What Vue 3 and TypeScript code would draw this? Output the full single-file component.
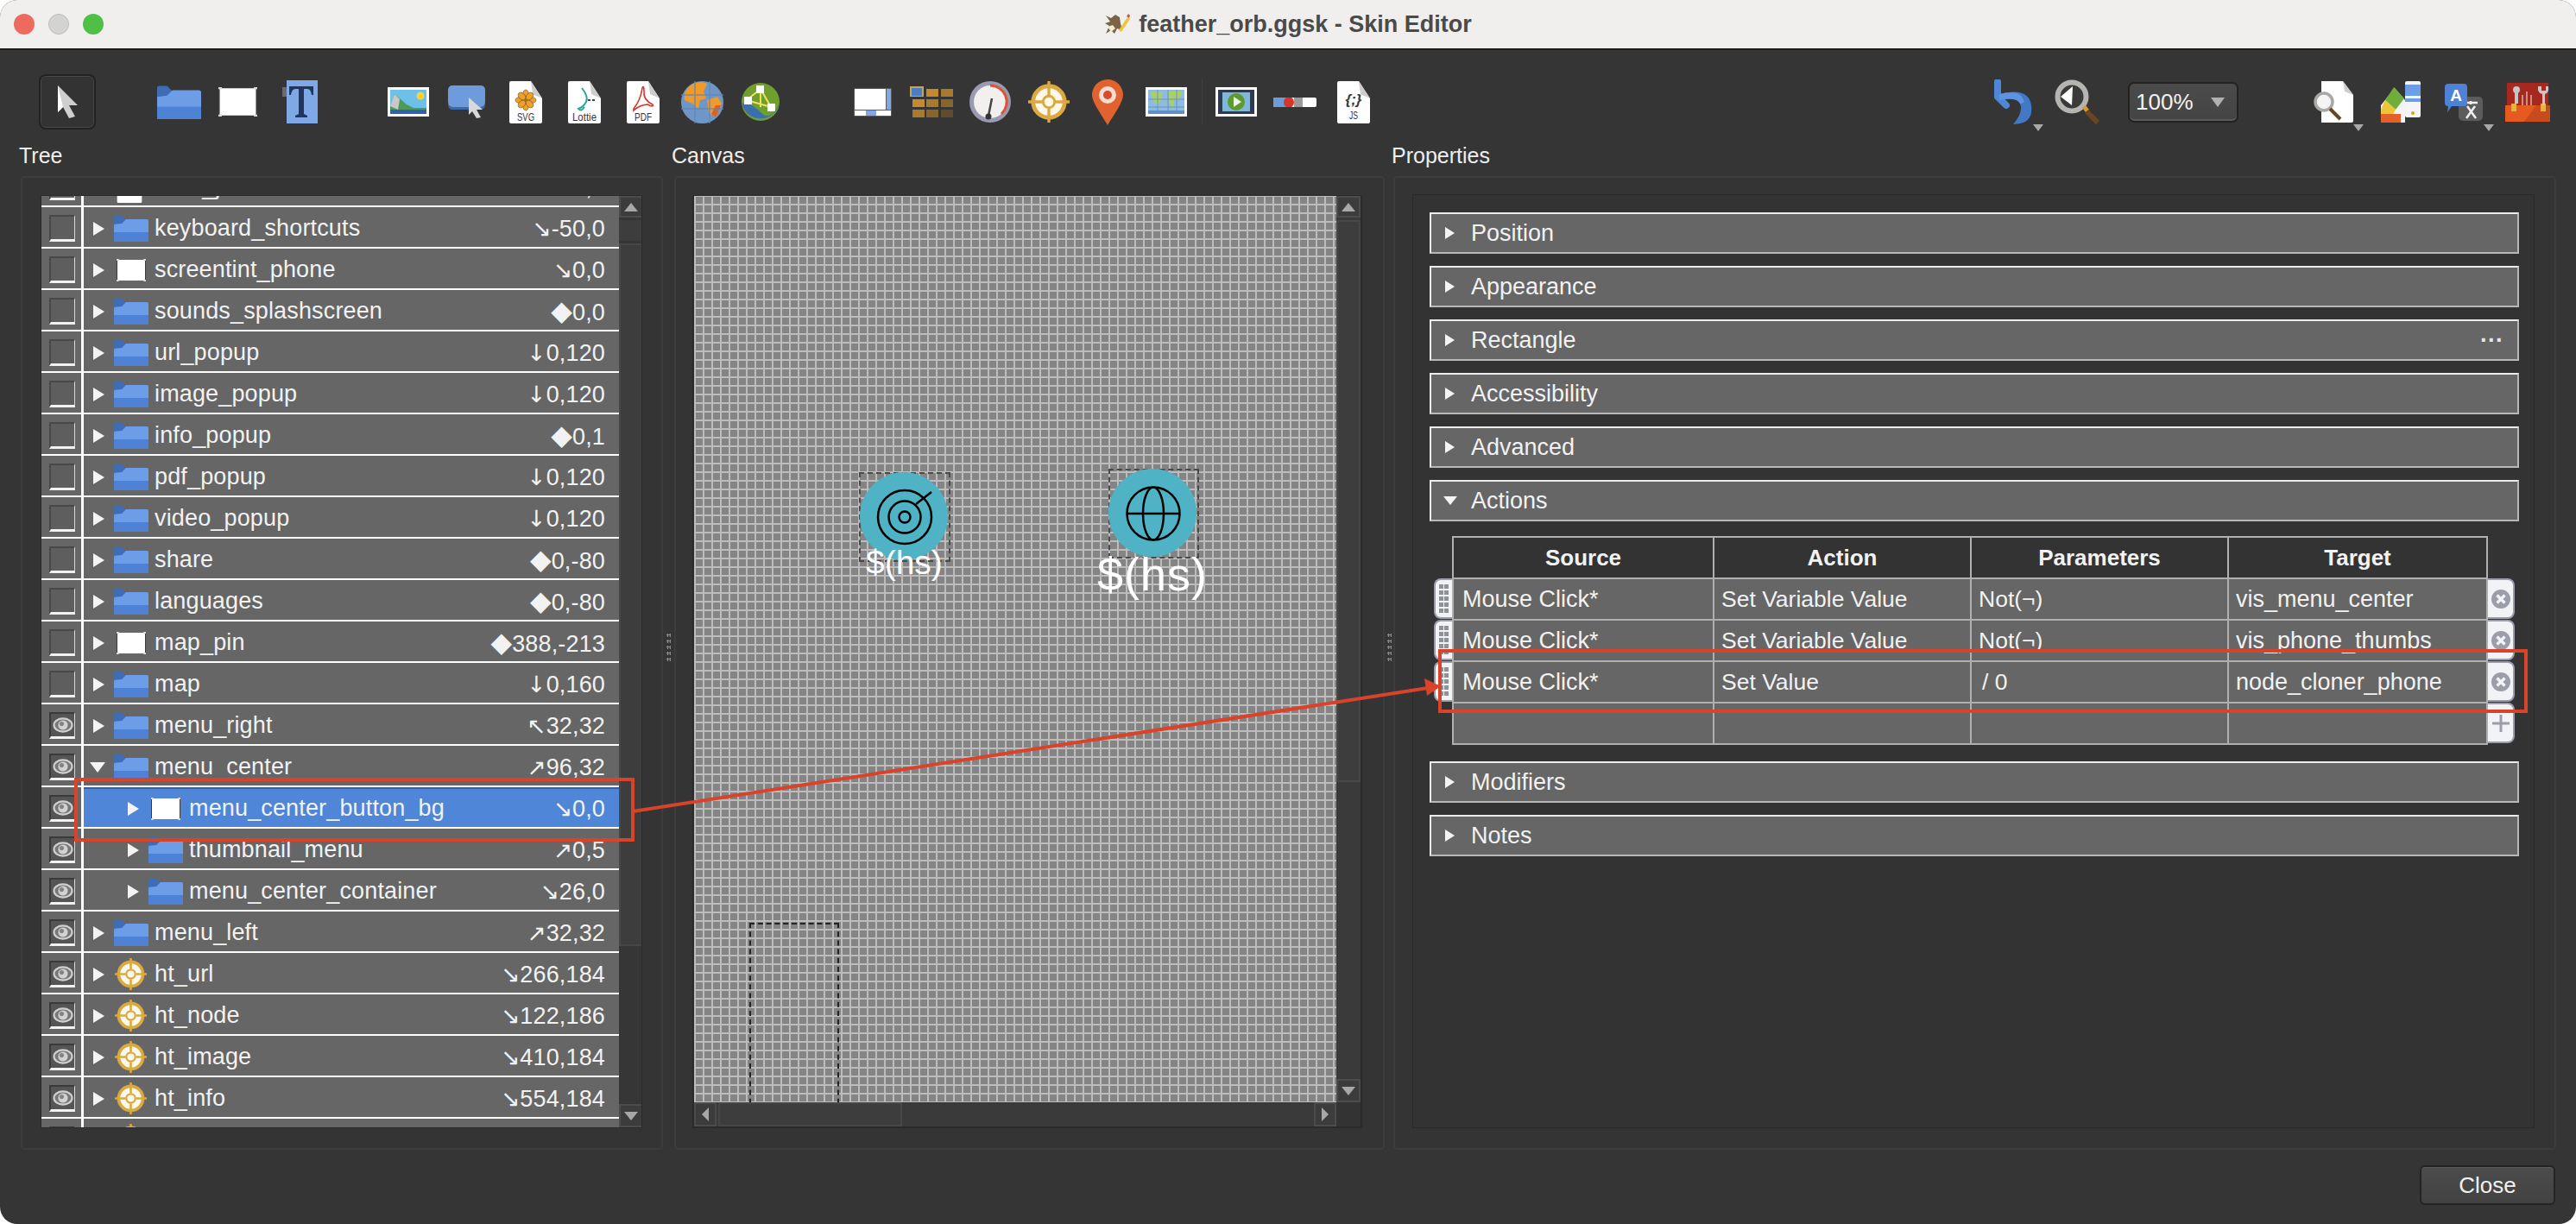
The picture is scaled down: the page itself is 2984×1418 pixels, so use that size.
<template>
  <div class="window">
    <!-- shared symbols -->
    <svg class="defs" aria-hidden="true">
      <symbol id="folder" viewBox="0 0 40 30">
        <path d="M0 2Q0 0 2 0H9L14 5 9 11H0Z" fill="#3e6db5" />
        <path d="M0 10L9 9 14 4H38Q40 4 40 6V30H0Z" fill="#6d9de6" />
        <rect x="0" y="19" width="40" height="11" fill="#4d82d6" />
      </symbol>
      <symbol id="rect" viewBox="0 0 34 26" preserveAspectRatio="none">
        <rect x="1" y="1" width="32" height="24" rx="1" fill="#fff" />
        <path d="M0 0h3v2H0zM31 0h3v2h-3zM0 24h3v2H0zM31 24h3v2h-3z" fill="#d8d8d8" />
        <path d="M0 2h1v22H0zM33 2h1v22h-1z" fill="#3a3a3a" />
      </symbol>
      <symbol id="hot" viewBox="0 0 50 50">
        <circle cx="25" cy="25" r="19" fill="#fdf8ea" stroke="#dba93f" stroke-width="5" />
        <path d="M25 0V17M25 33V50M0 25H17M33 25H50" stroke="#dba93f" stroke-width="3.5" />
        <circle cx="25" cy="25" r="7" fill="#fdf8ea" stroke="#dba93f" stroke-width="3" />
      </symbol>
      <symbol id="eye" viewBox="0 0 24 18">
        <ellipse cx="12" cy="9" rx="10.5" ry="7.6" fill="#777" stroke="#cfcfcf" stroke-width="2.2" />
        <circle cx="12" cy="9" r="5.6" fill="#d2d2d2" />
        <circle cx="10.5" cy="7.6" r="2.6" fill="#858585" />
      </symbol>
      <symbol id="page" viewBox="0 0 38 49">
        <path d="M2 0H25L38 20V47Q38 49 36 49H2Q0 49 0 47V2Q0 0 2 0Z" fill="#fff" />
        <path d="M25 0L38 20 27 15Z" fill="#cfcdcb" />
      </symbol>
      <symbol id="cursor" viewBox="0 0 27 38">
        <path d="M2 0L25 23 15 23 22 36 15 38 8 25 2 31Z" fill="#cfcfcf" />
        <path d="M2 0L8 25 2 31Z" fill="#fff" />
      </symbol>
      <symbol id="del" viewBox="0 0 22 22">
        <circle cx="11" cy="11" r="11" fill="#9b9ea8" />
        <path d="M6.5 6.5L15.5 15.5M15.5 6.5L6.5 15.5" stroke="#f2f3f7" stroke-width="3.4" />
      </symbol>
    </svg>

    <header class="titlebar">
      <div class="lights">
        <i class="light red"></i>
        <i class="light gray"></i>
        <i class="light green"></i>
      </div>
      <svg class="doc-icon" width="30" height="26" viewBox="0 0 30 26">
        <path d="M2 3L8 6 13 2 18 5 19 12 21 20 15 18 12 24 8 20 2 24 6 15 1 12 7 10Z" fill="#7a6445" />
        <path d="M4 16L10 14 13 18 8 22Z" fill="#f2ecd8" />
        <path d="M17 20L27 5 30 7 20 22Z" fill="#efc436" />
        <path d="M26 4L28 1 30 3 29 6Z" fill="#c65a45" />
      </svg>
      <span class="title">feather_orb.ggsk - Skin Editor</span>
    </header>

    <div class="toolbar">
      <button class="select-btn">
        <svg width="27" height="38"><use href="#cursor" /></svg>
      </button>

      <div class="tool first">
        <svg width="51" height="39"><use href="#folder" /></svg>
      </div>
      <div class="tool">
        <svg width="45" height="34"><use href="#rect" /></svg>
      </div>
      <div class="tool tool-t">
        <svg width="41" height="50" viewBox="0 0 41 50">
          <rect x="0" y="8" width="7" height="11" fill="#6b6b6b" />
          <rect x="5" y="0" width="36" height="50" fill="#7fa8e6" />
          <path d="M8 7H36V17H34Q33 10 29 10H25V39L29 41V43H15V41L19 39V10H15Q11 10 10 17H8Z" fill="#22355c" />
        </svg>
      </div>

      <div class="tool gap">
        <svg width="48" height="34" viewBox="0 0 48 34">
          <rect width="48" height="34" fill="#fff" />
          <rect x="3" y="3" width="42" height="28" fill="#6cc0ea" />
          <circle cx="38" cy="10" r="4.5" fill="#f2d43c" />
          <path d="M3 22L8 8 22 20 30 24H45V31H3Z" fill="#4f9a58" />
          <path d="M3 22L8 8 14 14 12 26Z" fill="#c9c9c9" />
          <rect x="3" y="26" width="42" height="5" fill="#2f63a8" />
        </svg>
      </div>
      <div class="tool">
        <svg width="44" height="38" viewBox="0 0 44 38">
          <rect width="43" height="25" rx="5" fill="#6d9bdc" />
          <path d="M0 18Q0 25 5 25H38Q43 25 43 18V21Q43 28 38 28H5Q0 28 0 21Z" fill="#3f6aa8" />
          <path d="M24 14L40 28 33 28 38 37 33 38 28 30 24 34Z" fill="#d8d8d8" />
        </svg>
      </div>
      <div class="tool">
        <svg width="38" height="49" viewBox="0 0 38 49">
          <use href="#page" />
          <g fill="#f0a028" stroke="#7a5a20" stroke-width=".7">
            <ellipse cx="19" cy="16" rx="3.5" ry="6" />
            <ellipse cx="19" cy="28" rx="3.5" ry="6" />
            <ellipse cx="13" cy="22" rx="6" ry="3.5" />
            <ellipse cx="25" cy="22" rx="6" ry="3.5" />
            <ellipse cx="14.500" cy="17.500" rx="3.500" ry="5" transform="rotate(-45 14.500 17.500)" />
            <ellipse cx="23.500" cy="17.500" rx="3.500" ry="5" transform="rotate(45 23.500 17.500)" />
            <ellipse cx="14.500" cy="26.500" rx="3.500" ry="5" transform="rotate(45 14.500 26.500)" />
            <ellipse cx="23.500" cy="26.500" rx="3.500" ry="5" transform="rotate(-45 23.500 26.500)" />
          </g>
          <text x="19" y="46" class="page-txt" textLength="20" lengthAdjust="spacingAndGlyphs">SVG</text>
        </svg>
      </div>
      <div class="tool">
        <svg width="38" height="49" viewBox="0 0 38 49">
          <use href="#page" />
          <path d="M16 8Q24 18 21 24T12 32Q15 36 19 30" fill="none" stroke="#2aa5a0" stroke-width="2" />
          <path d="M23 22h3M28 22h3" stroke="#444" stroke-width="2" />
          <text x="19" y="46" class="page-txt" textLength="28" lengthAdjust="spacingAndGlyphs">Lottie</text>
        </svg>
      </div>
      <div class="tool">
        <svg width="38" height="49" viewBox="0 0 38 49">
          <use href="#page" />
          <path d="M8 32Q16 22 18 8Q20 4 20 12Q19 22 30 27Q32 31 24 27Q14 28 8 34Z" fill="none" stroke="#d8322a" stroke-width="1.6" />
          <text x="19" y="46" class="page-txt" textLength="20" lengthAdjust="spacingAndGlyphs">PDF</text>
        </svg>
      </div>
      <div class="tool">
        <svg width="49" height="49" viewBox="0 0 49 49">
          <circle cx="24.500" cy="24.500" r="24.500" fill="#6e97c8" />
          <path d="M14 3Q24 -1 30 3L26 12 29 20 22 22 20 32 13 26 4 22Q2 10 14 3ZM30 22L42 18 47 26 40 42 32 37Z" fill="#f09a2a" />
          <path d="M40 28L46 28 40 42 35 38Z" fill="#d9622a" />
          <path d="M0 16H49M0 32H49M16 0V49M33 0V49" stroke="#5f86b5" stroke-width="1.500" opacity=".8" />
        </svg>
      </div>
      <div class="tool">
        <svg width="44" height="44" viewBox="0 0 44 44">
          <circle cx="22" cy="22" r="22" fill="#6f9f2e" />
          <path d="M0.500 24Q10 22 22 34T43.500 24A22 22 0 0 1 0.500 24Z" fill="#3a6fb0" />
          <path d="M22 7L6 20M22 7L34 28M22 7L22 28M6 20L34 28" stroke="#f2e15a" stroke-width="2" />
          <rect x="17" y="3" width="9" height="9" fill="#fff" />
          <rect x="3" y="16" width="9" height="9" fill="#fff" />
          <rect x="30" y="24" width="9" height="9" fill="#fff" />
        </svg>
      </div>

      <div class="tool gap">
        <svg width="44" height="33" viewBox="0 0 44 33">
          <rect width="44" height="33" rx="2" fill="#5a5a5a" />
          <rect x="1" y="1" width="36" height="24" fill="#fff" />
          <rect x="38" y="1" width="5" height="24" fill="#7fa8e6" />
          <rect x="1" y="26" width="42" height="6" fill="#fff" />
          <rect x="14" y="26" width="12" height="6" fill="#7fa8e6" />
        </svg>
      </div>
      <div class="tool">
        <svg width="51" height="37" viewBox="0 0 51 37">
          <rect width="16" height="12" fill="#c9a455" />
          <rect x="2" y="2" width="12" height="9" fill="#4a7fc6" />
          <rect x="19" y="3" width="14" height="9" fill="#c58a2e" />
          <rect x="36" y="3" width="14" height="9" fill="#a87a30" />
          <rect x="3" y="15" width="14" height="9" fill="#c58a2e" />
          <rect x="19" y="15" width="14" height="9" fill="#a87a30" />
          <rect x="36" y="15" width="14" height="9" fill="#86652f" />
          <rect x="3" y="27" width="14" height="9" fill="#a87a30" />
          <rect x="19" y="27" width="14" height="9" fill="#86652f" />
          <rect x="36" y="27" width="14" height="9" fill="#5e4c2e" />
        </svg>
      </div>
      <div class="tool">
        <svg width="50" height="48" viewBox="0 0 50 48">
          <circle cx="25" cy="24" r="24" fill="#9a9ab0" />
          <circle cx="25" cy="24" r="19" fill="#f2f0ee" />
          <path d="M25 5A19 19 0 0 1 38 38" fill="none" stroke="#d8553a" stroke-width="3" />
          <path d="M27 20L23 40" stroke="#444" stroke-width="2.500" />
          <circle cx="23" cy="41" r="3.500" fill="#333" />
        </svg>
      </div>
      <div class="tool">
        <svg width="50" height="48"><use href="#hot" /></svg>
      </div>
      <div class="tool">
        <svg width="36" height="53" viewBox="0 0 36 53">
          <path d="M18 0C8 0 0 8 0 18 0 26 10 40 18 53 26 40 36 26 36 18 36 8 28 0 18 0Z" fill="#e0622e" />
          <circle cx="18" cy="18" r="10" fill="#f3dcd0" />
          <circle cx="18" cy="18" r="5" fill="#d84a2a" />
        </svg>
      </div>
      <div class="tool">
        <svg width="48" height="34" viewBox="0 0 48 34">
          <rect width="48" height="34" fill="#fff" />
          <rect x="3" y="3" width="42" height="28" fill="#8dbbe2" />
          <path d="M6 5L20 6 18 15 13 22 8 13ZM26 5H43L38 15 33 14 32 26 27 17Z" fill="#a9cf6a" />
          <path d="M3 14H45M3 23H45M14 3V31M26 3V31M36 3V31" stroke="#5f8ab8" stroke-width=".8" />
          <rect x="3" y="27" width="42" height="4" fill="#5f8fc6" />
        </svg>
      </div>
      <div class="sep"></div>
      <div class="tool">
        <svg width="48" height="34" viewBox="0 0 48 34">
          <rect width="48" height="34" fill="#fff" />
          <rect x="3" y="3" width="42" height="28" fill="#2f3a52" />
          <rect x="8" y="6" width="32" height="22" fill="#7fb8d8" />
          <circle cx="24" cy="17" r="10" fill="#5f9a2e" />
          <path d="M21 11L30 17 21 23Z" fill="#f1f1f1" />
        </svg>
      </div>
      <div class="tool">
        <svg width="50" height="11" viewBox="0 0 50 11">
          <rect width="50" height="11" rx="2" fill="#fff" />
          <rect x="0" width="18" height="11" rx="2" fill="#6d9bdc" />
          <rect x="24" width="10" height="11" fill="#9a9a9a" />
          <ellipse cx="18" cy="5.500" rx="6" ry="6.500" fill="#d8342a" />
        </svg>
      </div>
      <div class="tool">
        <svg width="38" height="49" viewBox="0 0 38 49">
          <use href="#page" />
          <text x="19" y="27" class="page-code">{;}</text>
          <text x="19" y="44" class="page-txt" textLength="10" lengthAdjust="spacingAndGlyphs">JS</text>
        </svg>
      </div>

      <div class="tools-right">
        <div class="rtool">
          <svg width="44" height="52" viewBox="0 0 44 52">
            <path d="M4 3V20L14 30" fill="none" stroke="#4e86d8" stroke-width="8" stroke-linecap="round" />
            <path d="M6 17Q40 8 43 30T22 52Q34 38 30 28T6 24Z" fill="#4278c6" />
            <path d="M6 17Q26 12 32 20T30 28Q26 20 6 24Z" fill="#5c94e2" />
          </svg>
          <i class="drop"></i>
        </div>
        <div class="rtool">
          <svg width="52" height="52" viewBox="0 0 52 52">
            <circle cx="20" cy="20" r="16.500" fill="#3a3a3a" stroke="#b5b4b0" stroke-width="6" />
            <path d="M7 20L21 8 20 30Z" fill="#fff" />
            <path d="M32 33L36 30 40 35 36 38Z" fill="#d89a28" />
            <path d="M37 37L50 50" stroke="#6a4520" stroke-width="6" />
          </svg>
        </div>
        <div class="combo">
          <span>100%</span>
          <i class="combo-arrow"></i>
        </div>
        <div class="rtool rtool-doc">
          <svg width="46" height="48" viewBox="0 0 46 48">
            <path d="M9 0H34L46 16V46Q46 48 44 48H9Z" fill="#fff" />
            <path d="M34 0L46 16 36 12Z" fill="#cfcdcb" />
            <circle cx="12" cy="24" r="10" fill="#f4f4f4" stroke="#a8a8a4" stroke-width="3.500" />
            <path d="M19 32L31 44" stroke="#6a4520" stroke-width="4" />
          </svg>
          <i class="drop"></i>
        </div>
        <div class="rtool rtool-palette">
          <svg width="47" height="48" viewBox="0 0 47 48">
            <rect x="29" y="0" width="18" height="42" rx="2" fill="#f5f5f5" />
            <rect x="29" y="4" width="18" height="13" fill="#6d9de6" />
            <rect x="29" y="20" width="18" height="4" fill="#6d9de6" />
            <circle cx="38" cy="37" r="2" fill="#d8a028" />
            <path d="M1 48V28L17 8 29 22V48Z" fill="#f4f4f4" />
            <path d="M16 7L28 20 18 33 6 22Z" fill="#6fae3a" />
            <path d="M6 22L18 33 14 40H1Q0 32 6 22Z" fill="#efc436" />
            <path d="M1 38H24V48H1Z" fill="#e2622a" />
          </svg>
        </div>
        <div class="rtool">
          <svg width="44" height="43" viewBox="0 0 44 43">
            <rect x="16" y="15" width="28" height="28" rx="5" fill="#5c5c5c" />
            <path d="M23 22H38M30 20V24M25 40L35 26M26 26L36 40" stroke="#eee" stroke-width="2.600" fill="none" />
            <path d="M4 0H22Q26 0 26 4V22Q26 26 22 26H8L3 33 4 26Q0 26 0 22V4Q0 0 4 0Z" fill="#4d82d6" />
            <text x="13" y="20" class="a-txt">A</text>
          </svg>
          <i class="drop"></i>
        </div>
        <div class="rtool">
          <svg width="52" height="45" viewBox="0 0 52 45">
            <rect x="2" y="0" width="48" height="30" fill="#a7281e" />
            <path d="M0 26H52V45H0Z" fill="#e6591f" />
            <path d="M22 45L36 26H52V45Z" fill="#c94a1c" />
            <rect x="7" y="24" width="6" height="9" fill="#e8b33a" />
            <rect x="41" y="24" width="6" height="9" fill="#e8b33a" />
            <path d="M13 6V24" stroke="#c6c6c6" stroke-width="4" />
            <circle cx="13" cy="8" r="4" fill="#c6c6c6" />
            <path d="M20 14V26M25 10V26M30 14V26" stroke="#d8b0a8" stroke-width="1.500" />
            <path d="M38 4Q37 12 43 13V26H46V13Q51 12 50 4L47 4V9H42V4Z" fill="#c6c6c6" />
          </svg>
        </div>
      </div>
    </div>

    <div class="columns">
      <section class="col col-tree">
        <h2>Tree</h2>
        <div class="group">
          <div class="tree">
            <div class="rows">
              <div
                v-for="row in rows"
                :key="row.name"
                class="row"
                :class="{ selected: row.selected }"
              >
                <div class="vis">
                  <div class="box" :class="{ on: row.visible }">
                    <svg v-if="row.visible" width="24" height="18"><use href="#eye" /></svg>
                  </div>
                </div>
                <div class="node" :class="{ child: row.child }">
                  <i class="arrow" :class="{ open: row.open }"></i>
                  <svg v-if="row.icon === 'folder'" class="ic" width="40" height="30"><use href="#folder" /></svg>
                  <svg v-else-if="row.icon === 'rect'" class="ic ic-rect" width="34" height="26"><use href="#rect" /></svg>
                  <svg v-else-if="row.icon === 'hot'" class="ic ic-hot" width="37" height="37"><use href="#hot" /></svg>
                  <svg v-else class="ic ic-rect" width="30" height="37"><use href="#page" /></svg>
                  <span class="name">{{ row.name }}</span>
                  <span class="val">
                    <b class="dir" :class="{ dia: row.value.startsWith('◆') }">{{ row.value.slice(0, 1) }}</b>{{ row.value.slice(1) }}
                  </span>
                </div>
              </div>
            </div>
            <div class="vbar">
              <div class="sbtn"><i class="up"></i></div>
              <div class="spage"></div>
              <div class="shandle tree-handle"></div>
              <div class="strack"></div>
              <div class="sbtn down-btn"><i class="down"></i></div>
            </div>
          </div>
        </div>
      </section>

      <div class="grip"><i></i><i></i><i></i><i></i><i></i></div>

      <section class="col col-canvas">
        <h2>Canvas</h2>
        <div class="group">
          <div class="canvas-frame">
            <div class="canvas-top">
              <div class="canvas">
                <div class="dash dash-a"></div>
                <div class="dash dash-b"></div>
                <div class="dash dash-c"></div>

                <div class="orb orb-a">
                  <svg width="102" height="102" viewBox="0 0 102 102" fill="none" stroke="#000" stroke-width="2.500">
                    <circle cx="52" cy="52" r="31" />
                    <circle cx="52" cy="52" r="18.500" />
                    <circle cx="52" cy="52" r="6.500" />
                    <path d="M65 37L83 23" />
                  </svg>
                </div>
                <span class="hs hs-a">$(hs)</span>

                <div class="orb orb-b">
                  <svg width="102" height="102" viewBox="0 0 102 102" fill="none" stroke="#000" stroke-width="2.500">
                    <circle cx="52" cy="52" r="30.500" />
                    <ellipse cx="52" cy="52" rx="12" ry="30.500" />
                    <path d="M21.500 52H82.500" />
                  </svg>
                </div>
                <span class="hs hs-b">$(hs)</span>
              </div>
              <div class="vbar canvas-vbar">
                <div class="sbtn"><i class="up"></i></div>
                <div class="shandle canvas-handle"></div>
                <div class="strack"></div>
                <div class="sbtn down-btn"><i class="down"></i></div>
              </div>
            </div>
            <div class="hbar">
              <div class="sbtn hbtn"><i class="left"></i></div>
              <div class="shandle hhandle"></div>
              <div class="strack"></div>
              <div class="sbtn hbtn"><i class="right"></i></div>
              <div class="corner"></div>
            </div>
          </div>
        </div>
      </section>

      <div class="grip grip-b"><i></i><i></i><i></i><i></i><i></i></div>

      <section class="col col-props">
        <h2>Properties</h2>
        <div class="group">
          <div class="props">
            <div v-for="s in sectionsTop" :key="s" class="section">
              <i class="arrow small"></i>
              <span>{{ s }}</span>
              <em v-if="s === 'Rectangle'" class="more">···</em>
            </div>
            <div class="section">
              <i class="arrow small open"></i>
              <span>Actions</span>
            </div>

            <div class="actions">
              <div class="trow head">
                <div class="hnd none"></div>
                <div v-for="h in headers" :key="h" class="cell">{{ h }}</div>
              </div>
              <div v-for="a in actions" :key="a.target" class="trow">
                <div class="hnd"><i v-for="n in 10" :key="n"></i></div>
                <div class="cell">{{ a.source }}</div>
                <div class="cell">{{ a.action }}</div>
                <div class="cell" :class="{ slash: a.params === '/ 0' }">{{ a.params }}</div>
                <div class="cell">{{ a.target }}</div>
                <div class="endbtn">
                  <svg width="22" height="22"><use href="#del" /></svg>
                </div>
              </div>
              <div class="trow">
                <div class="hnd none"></div>
                <div class="cell"></div>
                <div class="cell"></div>
                <div class="cell"></div>
                <div class="cell"></div>
                <div class="endbtn plus">
                  <svg width="22" height="22" viewBox="0 0 22 22"><path d="M11 1V21M1 11H21" stroke="#9b9ea8" stroke-width="3" /></svg>
                </div>
              </div>
            </div>

            <div class="section">
              <i class="arrow small"></i>
              <span>Modifiers</span>
            </div>
            <div class="section">
              <i class="arrow small"></i>
              <span>Notes</span>
            </div>
          </div>
        </div>
      </section>
    </div>

    <footer class="footer">
      <button class="close">Close</button>
    </footer>

    <!-- red annotation drawn on top of the screenshot -->
    <svg class="annot" width="2984" height="1418" viewBox="0 0 2984 1418" fill="none" stroke="#d8432a" stroke-width="4">
      <rect x="88" y="903" width="645" height="70" />
      <rect x="1668" y="754" width="1258" height="70" />
      <path d="M733 940L1654 797" stroke-width="4" />
      <path d="M1669 795L1650 786 1653 806Z" fill="#d8432a" stroke="none" />
    </svg>
  </div>
</template>

<script setup lang="ts">
interface TreeRow {
  name: string
  value: string
  icon: 'folder' | 'rect' | 'hot' | 'page'
  visible?: boolean
  child?: boolean
  open?: boolean
  selected?: boolean
}

const rows: TreeRow[] = [
  { name: 'code_js', value: '↘0,0', icon: 'page' },
  { name: 'keyboard_shortcuts', value: '↘-50,0', icon: 'folder' },
  { name: 'screentint_phone', value: '↘0,0', icon: 'rect' },
  { name: 'sounds_splashscreen', value: '◆0,0', icon: 'folder' },
  { name: 'url_popup', value: '↓0,120', icon: 'folder' },
  { name: 'image_popup', value: '↓0,120', icon: 'folder' },
  { name: 'info_popup', value: '◆0,1', icon: 'folder' },
  { name: 'pdf_popup', value: '↓0,120', icon: 'folder' },
  { name: 'video_popup', value: '↓0,120', icon: 'folder' },
  { name: 'share', value: '◆0,-80', icon: 'folder' },
  { name: 'languages', value: '◆0,-80', icon: 'folder' },
  { name: 'map_pin', value: '◆388,-213', icon: 'rect' },
  { name: 'map', value: '↓0,160', icon: 'folder' },
  { name: 'menu_right', value: '↖32,32', icon: 'folder', visible: true },
  { name: 'menu_center', value: '↗96,32', icon: 'folder', visible: true, open: true },
  { name: 'menu_center_button_bg', value: '↘0,0', icon: 'rect', visible: true, child: true, selected: true },
  { name: 'thumbnail_menu', value: '↗0,5', icon: 'folder', visible: true, child: true },
  { name: 'menu_center_container', value: '↘26,0', icon: 'folder', visible: true, child: true },
  { name: 'menu_left', value: '↗32,32', icon: 'folder', visible: true },
  { name: 'ht_url', value: '↘266,184', icon: 'hot', visible: true },
  { name: 'ht_node', value: '↘122,186', icon: 'hot', visible: true },
  { name: 'ht_image', value: '↘410,184', icon: 'hot', visible: true },
  { name: 'ht_info', value: '↘554,184', icon: 'hot', visible: true },
  { name: 'ht_video', value: '↘698,184', icon: 'hot', visible: true }
]

const sectionsTop = ['Position', 'Appearance', 'Rectangle', 'Accessibility', 'Advanced']
const headers = ['Source', 'Action', 'Parameters', 'Target']

const actions = [
  { source: 'Mouse Click*', action: 'Set Variable Value', params: 'Not(¬)', target: 'vis_menu_center' },
  { source: 'Mouse Click*', action: 'Set Variable Value', params: 'Not(¬)', target: 'vis_phone_thumbs' },
  { source: 'Mouse Click*', action: 'Set Value', params: '/ 0', target: 'node_cloner_phone' }
]
</script>

<style>
html,
body {
  background: #fff;
}
</style>

<style scoped>
.window {
  position: relative;
  width: 2984px;
  height: 1418px;
  background: #353535;
  border-radius: 20px;
  overflow: hidden;
  font-family: "Liberation Sans", Arial, sans-serif;
  font-size: 26px;
  color: #f2f2f2;
}
.defs {
  position: absolute;
  width: 0;
  height: 0;
}

/* title bar */
.titlebar {
  height: 56px;
  background: #f0efee;
  border-bottom: 2px solid #1c1c1c;
  display: flex;
  align-items: center;
  justify-content: center;
  position: relative;
}
.lights {
  position: absolute;
  left: 16px;
  top: 16px;
  display: flex;
  gap: 16px;
}
.light {
  width: 24px;
  height: 24px;
  border-radius: 50%;
}
.red { background: #ec6a5e; }
.gray { background: #d3d3d2; border: 1px solid #bdbdbc; box-sizing: border-box; }
.green { background: #4fbf46; }
.doc-icon {
  margin-right: 10px;
}
.title {
  font-weight: 700;
  font-size: 27px;
  color: #4a4a4a;
}

/* toolbar */
.toolbar {
  height: 108px;
  padding: 12px 0 0 45px;
  box-sizing: border-box;
  display: flex;
  align-items: center;
}
.select-btn {
  width: 66px;
  height: 64px;
  margin: 0;
  padding: 0;
  background: #333;
  border: 2px solid #222;
  border-radius: 8px;
  box-shadow: inset 0 0 0 1px #484848;
  display: flex;
  align-items: center;
  justify-content: center;
}
.tool {
  width: 68px;
  height: 96px;
  flex: none;
  display: flex;
  align-items: center;
  justify-content: center;
}
.tool.first {
  margin-left: 62px;
}
.tool.gap {
  margin-left: 62px;
}
.tool-t {
  padding-left: 9px;
  box-sizing: border-box;
}
.sep {
  width: 1px;
  height: 54px;
  margin: 0 5px 0 7px;
  background: #3e3e3e;
}
.page-txt {
  font-family: "Liberation Sans Narrow", "Liberation Sans", sans-serif;
  font-size: 12px;
  fill: #333;
  text-anchor: middle;
}
.page-code {
  font-family: "Liberation Sans", sans-serif;
  font-size: 17px;
  font-weight: 700;
  font-style: italic;
  fill: #3a3a3a;
  text-anchor: middle;
}
.a-txt {
  font-family: "Liberation Sans", sans-serif;
  font-size: 19px;
  font-weight: 700;
  fill: #fff;
  text-anchor: middle;
}
.tools-right {
  margin-left: auto;
  padding-right: 19px;
  display: flex;
  align-items: center;
}
.rtool {
  position: relative;
  width: 74px;
  height: 96px;
  flex: none;
  display: flex;
  align-items: center;
  justify-content: center;
}
.rtool-doc {
  margin-left: 73px;
}
.rtool-palette {
  margin-left: 3px;
}
.drop {
  position: absolute;
  left: 60px;
  top: 74px;
  border: 6px solid transparent;
  border-top: 8px solid #a8a8a8;
  border-bottom: 0;
}
.combo {
  width: 128px;
  height: 47px;
  margin-left: 22px;
  box-sizing: border-box;
  border: 2px solid #222;
  border-radius: 7px;
  background: linear-gradient(#4b4b4b, #444);
  box-shadow: inset 0 -2px 0 #5a5a5a;
  display: flex;
  align-items: center;
  justify-content: space-between;
  padding: 0 14px 0 7px;
  font-size: 26px;
}
.combo-arrow {
  border: 8px solid transparent;
  border-top: 11px solid #b0b0b0;
  border-bottom: 0;
}

/* columns */
.columns {
  display: flex;
  padding-left: 24px;
}
.col h2 {
  margin: 0;
  height: 38px;
  line-height: 28px;
  font-size: 25px;
  font-weight: 400;
  color: #eee;
  padding-left: 0;
}
.col-tree { width: 744px; }
.col-tree h2 { margin-left: -2px; }
.col-canvas { width: 823px; }
.col-canvas h2 { margin-left: -3px; }
.col-props { width: 1347px; }
.col-props h2 { margin-left: -2px; }
.group {
  height: 1128px;
  box-sizing: border-box;
  border: 2px solid #3d3d3d;
  border-radius: 5px;
  background: #343434;
}
.grip {
  width: 13px;
  padding-top: 568px;
  box-sizing: border-box;
  display: flex;
  flex-direction: column;
  align-items: center;
  gap: 3px;
}
.grip-b {
  width: 10px;
}
.grip i {
  width: 5px;
  height: 4px;
  background: radial-gradient(circle, #8a8a8a 1px, transparent 1.500px) 0 0 / 3px 3px;
}

/* tree */
.tree {
  margin: 20px 22px 0 21px;
  height: 1081px;
  display: flex;
  background: #333;
  border: 1px solid #2a2a2a;
  box-sizing: border-box;
  overflow: hidden;
}
.rows {
  width: 669px;
  flex: none;
  margin-top: -35px;
}
.row {
  height: 48px;
  box-sizing: border-box;
  display: flex;
  background: #666;
  border-bottom: 2px solid #fff;
}
.vis {
  width: 49px;
  flex: none;
  box-sizing: border-box;
  border-right: 3px solid #fff;
  padding-left: 9px;
  padding-top: 3px;
  display: flex;
  align-items: center;
}
.box {
  width: 30px;
  height: 31px;
  box-sizing: border-box;
  border: 2px solid #484848;
  border-right: 1px solid #d8d8d8;
  border-bottom: 3px solid #f2f2f2;
  background: #5e5e5e;
  display: flex;
  align-items: center;
  justify-content: center;
}
.box.on {
  background: #555;
  border-top-color: #3a3a3a;
  border-left-color: #3a3a3a;
}
.node {
  flex: 1;
  min-width: 0;
  display: flex;
  align-items: center;
  padding: 3px 16px 0 11px;
  position: relative;
}
.node.child {
  padding-left: 51px;
}
.row.selected .node {
  background: #4f86d7;
  box-shadow: inset 0 2px 0 #3f5f8f;
}
.arrow {
  flex: none;
  width: 0;
  height: 0;
  border-style: solid;
  border-width: 8px 0 8px 13px;
  border-color: transparent transparent transparent #f4f4f4;
  margin-right: 11px;
}
.arrow.open {
  border-width: 12px 9px 0 9px;
  border-color: #f4f4f4 transparent transparent transparent;
  margin-left: -4px;
  margin-right: 10px;
}
.ic {
  flex: none;
}
.ic-rect {
  margin: 0 3px;
}
.ic-hot {
  margin: 0 2px 0 1px;
}
.name {
  margin-left: 7px;
  font-size: 27px;
  letter-spacing: .15px;
  white-space: nowrap;
}
.val {
  margin-left: auto;
  font-size: 27px;
  letter-spacing: .15px;
  white-space: nowrap;
}
.dir {
  font-family: "DejaVu Sans", sans-serif;
  font-weight: 400;
  font-size: 26.500px;
}
.dir.dia {
  font-size: 32px;
  line-height: 1;
}

/* scroll bars */
.vbar {
  width: 28px;
  flex: none;
  display: flex;
  flex-direction: column;
  background: #363636;
}
.sbtn {
  height: 25px;
  flex: none;
  box-sizing: border-box;
  border: 2px solid #4c4c4c;
  background: #3c3c3c;
  display: flex;
  align-items: center;
  justify-content: center;
}
.down-btn {
  height: 27px;
}
.spage {
  height: 24px;
  margin: 3px 0;
  background: #3d3d3d;
}
.shandle {
  flex: none;
  box-sizing: border-box;
  background: #3d3d3d;
  border: 2px solid #474747;
}
.tree-handle {
  height: 814px;
}
.strack {
  flex: 1;
}
.up {
  border: 8px solid transparent;
  border-bottom: 10px solid #a8a8a8;
  border-top: 0;
}
.down {
  border: 8px solid transparent;
  border-top: 10px solid #a8a8a8;
  border-bottom: 0;
}
.left {
  border: 8px solid transparent;
  border-right: 8px solid #a8a8a8;
  border-left: 0;
}
.right {
  border: 8px solid transparent;
  border-left: 8px solid #a8a8a8;
  border-right: 0;
}

/* canvas */
.canvas-frame {
  margin: 20px 24px 0 19px;
  height: 1081px;
  box-sizing: border-box;
  border: 2px solid #2a2a2a;
  border-top-width: 1px;
  display: flex;
  flex-direction: column;
  background: #3a3a3a;
}
.canvas-top {
  flex: 1;
  display: flex;
  min-height: 0;
}
.canvas {
  position: relative;
  flex: 1;
  overflow: hidden;
  background-color: #848484;
  background-image:
    linear-gradient(#bcbcbc 2px, transparent 2px),
    linear-gradient(90deg, #bcbcbc 2px, transparent 2px);
  background-size: 10px 10px;
  background-position: 0 9px;
}
.dash {
  position: absolute;
  box-sizing: border-box;
  border: 2px dashed #4a4a4a;
}
.dash-a { left: 191px; top: 320px; width: 106px; height: 104px; }
.dash-b { left: 480px; top: 316px; width: 105px; height: 104px; }
.dash-c { left: 64px; top: 842px; width: 104px; height: 220px; border-color: #222; }
.orb {
  position: absolute;
  width: 102px;
  height: 102px;
  border-radius: 50%;
  background: #4fb3c5;
}
.orb-a { left: 192px; top: 320px; }
.orb-b { left: 480px; top: 316px; }
.hs {
  position: absolute;
  color: #fff;
  white-space: nowrap;
  line-height: 1;
}
.hs-a { left: 199px; top: 405px; font-size: 39px; }
.hs-b { left: 467px; top: 411px; font-size: 54px; letter-spacing: 1px; }
.canvas-vbar {
  background: #3a3a3a;
}
.canvas-handle {
  height: 651px;
  margin-top: 3px;
}
.hbar {
  height: 28px;
  flex: none;
  display: flex;
}
.hbtn {
  width: 26px;
  height: 28px;
}
.hhandle {
  width: 213px;
  margin-left: 2px;
}
.corner {
  width: 28px;
  background: #333;
}

/* properties */
.props {
  margin: 19px 23px 0 20px;
  height: 1082px;
  box-sizing: border-box;
  border: 1px solid #2a2a2a;
  padding: 20px 17px 0 19px;
  background: #333;
}
.section {
  height: 48px;
  box-sizing: border-box;
  margin-bottom: 14px;
  background: #666;
  border: 2px solid #b8b8b8;
  border-top-color: #ececec;
  border-left-color: #ececec;
  display: flex;
  align-items: center;
  padding-left: 16px;
  font-size: 27px;
}
.arrow.small {
  border-width: 7px 0 7px 11px;
  margin-right: 19px;
}
.arrow.small.open {
  border-width: 10px 8px 0 8px;
  margin-left: -2px;
  margin-right: 16px;
}
.more {
  margin-left: auto;
  margin-right: 16px;
  font-style: normal;
  font-weight: 700;
  color: #e8e8e8;
}
.actions {
  margin: 17px 0 19px 5px;
}
.trow {
  display: flex;
  height: 48px;
}
.trow .cell {
  flex: none;
  box-sizing: border-box;
  width: 298px;
  padding-left: 8px;
  background: #666;
  border-left: 2px solid #b0b0b0;
  border-top: 2px solid #b0b0b0;
  display: flex;
  align-items: center;
  font-size: 26.5px;
  white-space: nowrap;
}
.trow .cell:nth-child(2) {
  width: 302px;
  padding-left: 10px;
  font-size: 27px;
}
.trow .cell:nth-child(5) {
  width: 302px;
  border-right: 2px solid #b0b0b0;
  font-size: 27px;
}
.trow:last-child {
  height: 50px;
}
.trow:last-child .cell {
  border-bottom: 2px solid #b0b0b0;
}
.trow.head .cell {
  background: #333;
  font-size: 26px;
  font-weight: 700;
  justify-content: center;
  padding-left: 0;
}
.trow .cell.slash {
  padding-left: 12px;
}
.hnd {
  width: 21px;
  flex: none;
  box-sizing: border-box;
  height: 47px;
  margin-top: 1px;
  background: #f2f3f7;
  border: 2px solid #9b9ea8;
  border-right: 0;
  border-radius: 8px 0 0 8px;
  display: grid;
  grid-template-columns: 5px 5px;
  grid-auto-rows: 5px;
  gap: 2px 1px;
  align-content: center;
  justify-content: center;
}
.hnd i {
  background: #8f9199;
}
.hnd.none {
  background: none;
  border: 0;
}
.endbtn {
  width: 31px;
  flex: none;
  box-sizing: border-box;
  height: 47px;
  margin-top: 1px;
  background: #f2f3f7;
  border: 2px solid #9b9ea8;
  border-left: 0;
  border-radius: 0 8px 8px 0;
  display: flex;
  align-items: center;
  justify-content: center;
}

/* footer */
.footer {
  display: flex;
  justify-content: flex-end;
  padding: 18px 24px 0 0;
}
.close {
  width: 157px;
  height: 46px;
  margin: 0;
  padding: 0;
  border: 2px solid #242424;
  border-radius: 6px;
  background: linear-gradient(#4c4c4c, #424242);
  box-shadow: inset 0 1px 0 #5c5c5c;
  color: #f2f2f2;
  font-family: inherit;
  font-size: 26px;
}

/* annotation overlay */
.annot {
  position: absolute;
  left: 0;
  top: 0;
  pointer-events: none;
}
</style>
